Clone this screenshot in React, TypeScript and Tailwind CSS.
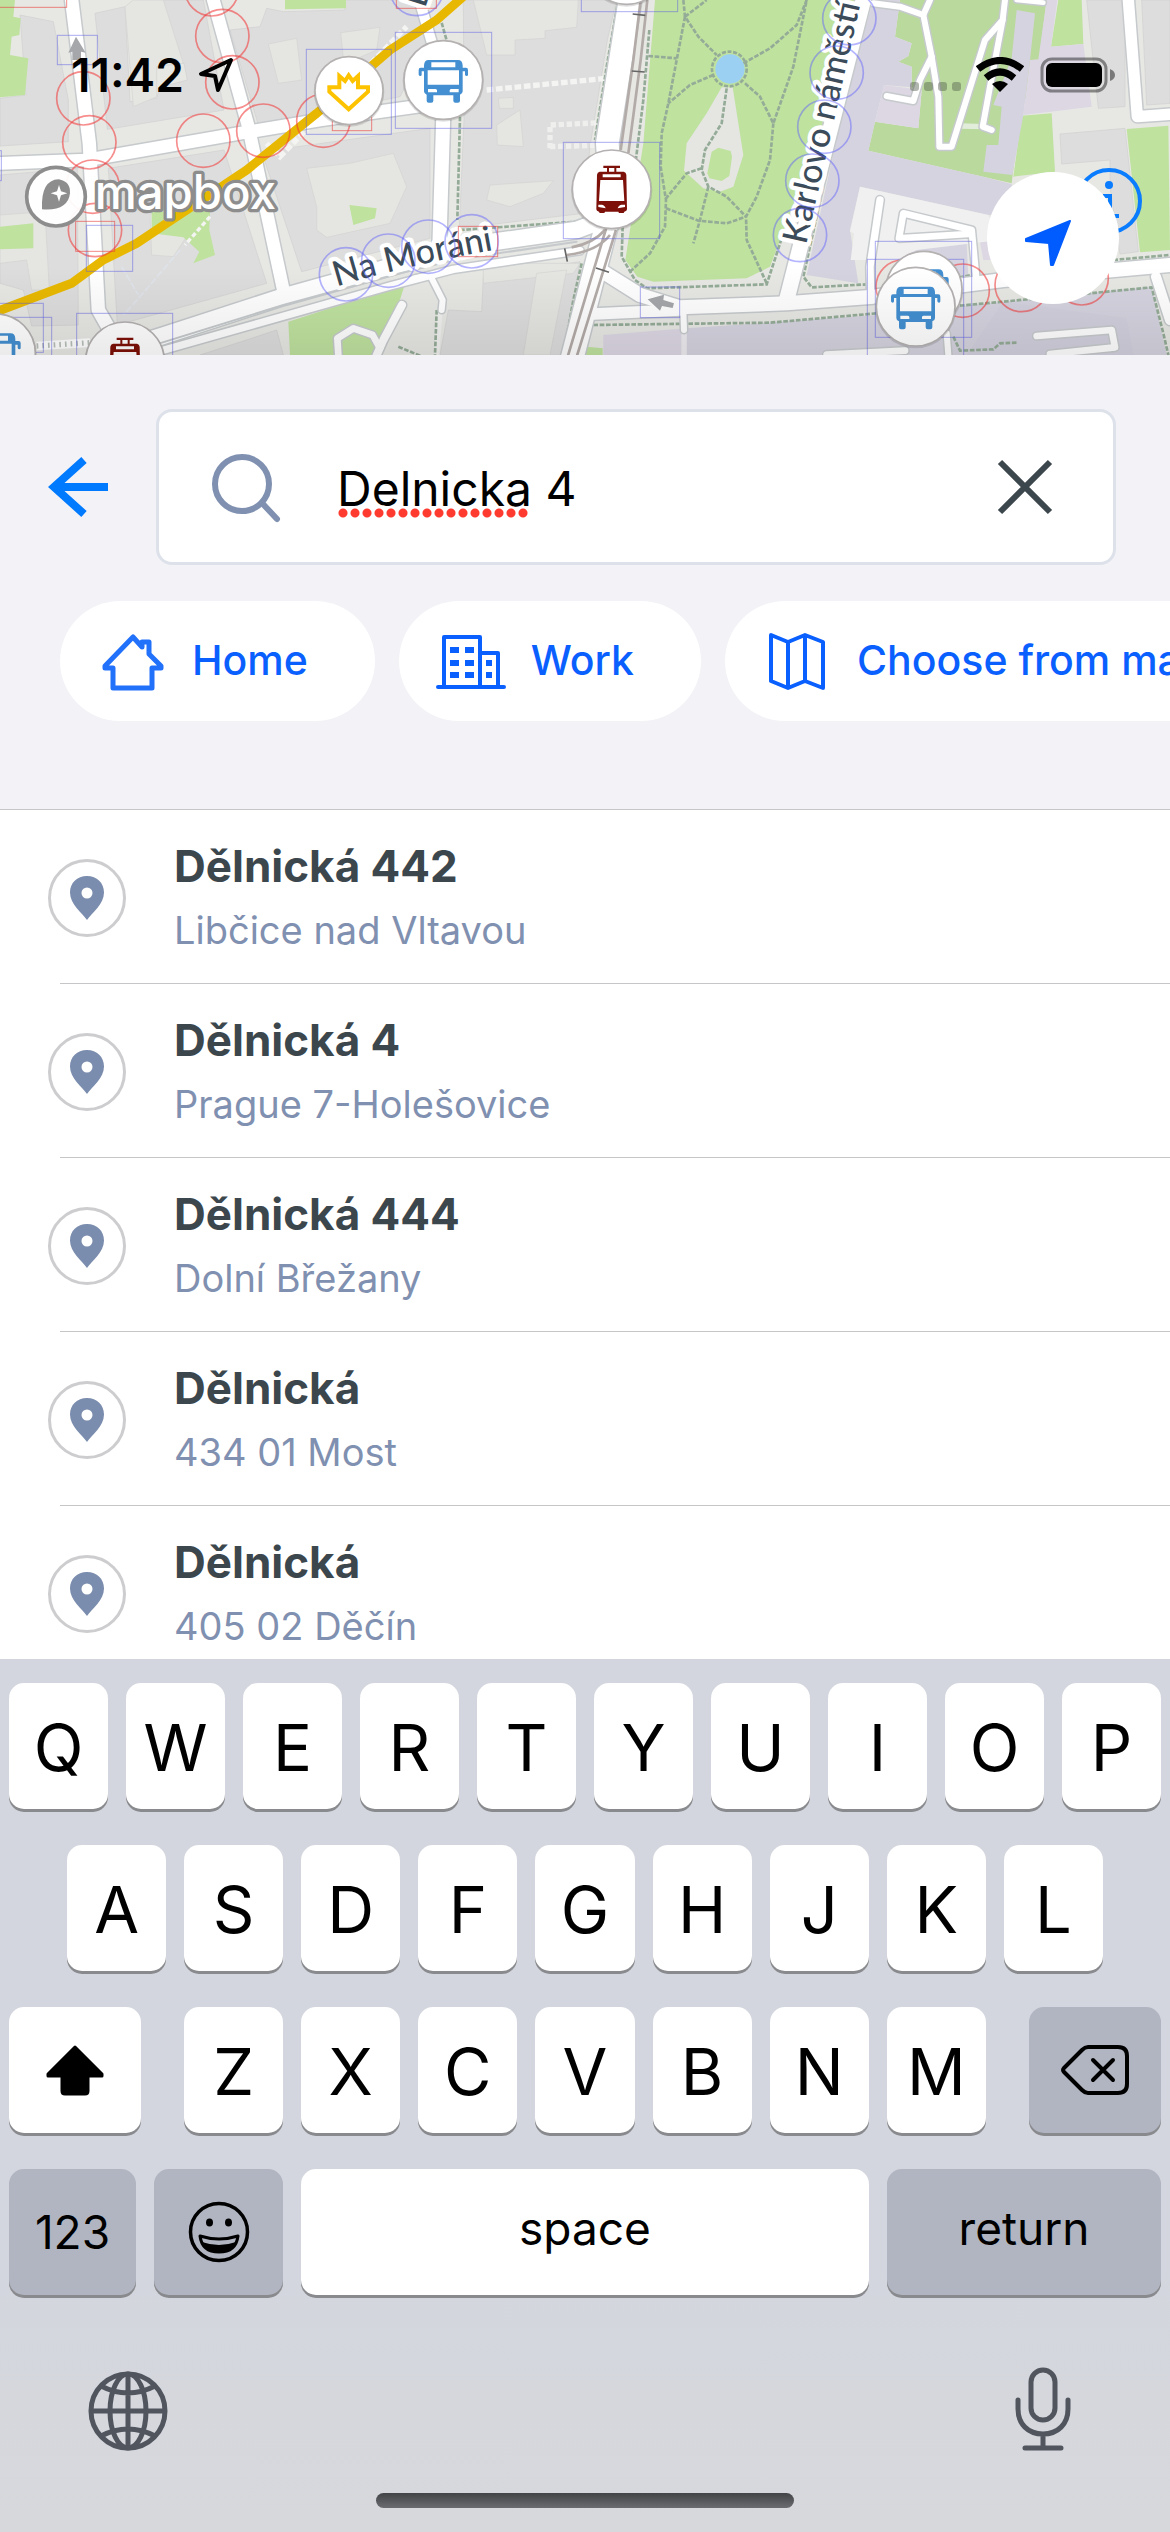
import React, { useState } from "react";

/* ---------- map drawing (units: one third of a pixel) ---------- */

const BUILDINGS = [
  "60,45 160,65 205,300 205,425 0,438 0,295 78,285",
  "285,40 375,20 390,305 470,295 480,262 562,240 552,190 520,182 488,0 610,0 672,330 322,388",
  "800,25 850,35 1035,30 1035,0 1260,0 1290,120 1200,290 775,375 690,90 780,80",
  "0,525 232,505 235,975 95,978 70,870 0,850",
  "325,505 672,450 800,850 352,975",
  "785,455 1290,385 1290,715 905,815",
  "740,1020 830,990 850,1065 600,1065",
  "1390,0 1850,0 1822,120 1770,440 1750,640 1378,685 1392,360",
  "1450,830 1740,785 1690,1065 1320,1065 1345,930 1445,935",
  "3260,0 3375,0 3375,320 3295,325",
  "3425,0 3510,0 3510,310 3440,315",
  "3180,402 3375,385 3415,755 3360,762 3330,560 3330,480 3185,492",
];

const YARDS = [
  "400,0 490,0 550,190 470,200 470,290 400,320 375,20",
  "805,132 890,115 905,240 835,250",
  "1022,98 1140,82 1130,150 1050,185 1030,175",
  "0,645 135,635 148,870 95,870 80,780 0,790",
  "450,640 540,700 560,710 520,770 455,765",
  "920,505 1050,490 1180,460 1220,560 1170,670 980,712 950,690 950,620",
  "1420,0 1735,0 1730,82 1635,92 1635,115 1545,120 1545,165 1460,165",
  "1495,295 1540,292 1540,325 1498,325",
  "1490,375 1560,330 1570,440 1492,435",
  "1470,555 1660,542 1630,580 1530,620 1460,600",
  "1450,790 1740,790 1720,820 1450,850",
  "1610,820 1700,810 1650,1065 1570,1065",
];

const GREENS = [
  "0,0 45,0 40,50 62,55 58,105 35,110 30,165 85,175 75,285 0,292",
  "855,0 1038,0 1038,25 855,28",
  "0,680 100,670 100,745 0,748",
  "455,635 630,632 628,690 645,765 580,790 598,755 550,712 455,700",
  "1048,615 1130,625 1125,655 1060,675",
  "865,965 1215,852 1190,930 1130,1065 870,1065",
  "1965,0 2610,0 2310,800 2240,835 1960,845 1912,830 1876,780 1930,430",
  "1760,1040 1808,1045 1808,1065 1750,1065",
  "3175,0 3245,0 3250,132 3153,140",
  "3065,347 3155,340 3165,515 3040,530",
  "3380,387 3505,377 3510,750 3420,757",
];

const CAMPUS = "2700,0 3140,0 3118,178 3060,345 3035,550 2605,452 2625,365 2755,385 2765,270 2735,262 2735,200 2695,185 2725,168 2735,130 2685,110";

const PURPLES = [
  "2620,0 2700,0 2685,110 2735,130 2725,168 2695,185 2735,200 2735,262 2652,255 2625,365 2605,452 2950,530 3035,552 3040,640 2965,645 2580,560 2550,690 2575,850 2420,825 2540,280",
  "3050,30 3105,40 3090,180 3070,345 3037,525 2950,515 2960,435 2995,435 3005,320 2980,315 3035,175",
  "2060,985 2630,945 3010,905 3455,860 3500,1065 2060,1065",
  "2700,740 2900,730 2905,830 2680,840",
];

const LILACS = [
  "3140,0 3172,0 3153,140 3250,132 3275,320 3070,345 3090,180 3115,178",
  "2652,255 2765,270 2755,385 2625,365",
  "1810,1005 2060,985 2060,1065 1810,1065",
  "2940,725 3000,720 3000,780 2950,780",
];

const ROADS: [string, number][] = [
  ["M215,0L268,430L295,930L335,1000", 40],
  ["M0,490L260,480L720,400L960,360L1260,318", 38],
  ["M640,0L745,380L850,870", 38],
  ["M300,1065L480,1010L850,890L1210,790L1450,730L1730,690L1810,660", 50],
  ["M450,1062L1170,858L1360,808L1740,752", 22],
  ["M1330,340L1318,740", 42],
  ["M1258,0L1302,150", 30],
  ["M1890,0L1822,430L1835,620L1808,720L1715,1080", 68],
  ["M1808,815L1920,885L2040,922L2360,910L2620,890L3010,840L3510,795", 42],
  ["M1780,942L2040,930", 34],
  ["M2590,0L2360,900", 46],
  ["M3385,0L3412,350L3520,342", 34],
  ["M2620,10L2700,20L2770,45L2795,170L2815,290L2818,440L2855,440L2955,120L3008,60L3015,0", 18],
  ["M2770,45L2790,0", 18],
  ["M2795,170L2760,240L2740,303L2660,288", 18],
  ["M3008,60L2970,260L2948,380L2975,390", 18],
  ["M3050,0L3130,8", 14],
  ["M2640,600L2610,800L2612,890", 22],
  ["M2930,850L2915,690L2710,640L2697,715L2905,702", 20],
  ["M3110,1008L3335,990L3345,1042L3150,1062", 20],
  ["M2480,1064L2715,1052", 20],
  ["M2840,1000L2845,1065", 18],
  ["M3468,830L3510,960", 30],
  ["M2050,930L2052,990", 18],
  ["M1242,835L1290,825L1328,900L1325,930", 18],
  ["M1206,915L1150,1020L1130,1065", 24],
  ["M1015,1065L1012,1015L1060,985L1118,1005L1140,1045", 20],
];

const FOOTPATHS = [
  "M2050,0L2055,50L2095,110L2150,165",
  "M2055,50L2120,0",
  "M2055,50L2030,180L2005,310L1985,400L1982,500L1998,600L1995,680L1950,760L1890,815",
  "M2140,225L2070,255L2005,310",
  "M2230,190L2310,145L2390,75L2420,0",
  "M2235,250L2280,290L2320,370L2380,200L2420,0",
  "M2320,370L2310,480L2270,590L2238,650L2240,720L2300,850",
  "M2180,265L2165,370L2115,450L2105,510L2125,560L2180,590L2238,650",
  "M2105,505L2060,520L1998,595",
  "M2125,560L2100,660L2080,730",
  "M1998,625L2095,662L2180,670L2238,650",
  "M1948,90L1930,300L1905,500",
  "M1945,168L2030,175",
  "M1868,680L1865,770L1905,840L1940,865L2300,853L2350,700",
  "M1780,975L2310,968L2630,940L3010,905L3455,862L3490,1000L3505,1065",
  "M2540,240L2410,830L2435,862L2620,852",
  "M2840,840L2930,822M3340,780L3510,765",
  "M2860,1010L2880,1052L2980,1048L3000,1030L3050,1028",
  "M1320,50L1345,140M1380,350L1372,660",
  "M1380,690L1730,665",
  "M1855,0L1820,200L1785,420",
  "M1745,790L1720,900L1690,1065M1310,930L1305,1065",
  "M1195,1040L1290,1080",
];

const RED_RINGS = [[635, -32], [667, 108], [697, 247], [790, 392], [610, 422], [970, 362], [250, 295], [268, 427], [278, 560], [285, 690], [2708, 860], [2888, 872], [3065, 855], [3245, 835]];
const BLUE_RINGS = [[1038, 823], [1165, 782], [1285, 740], [1415, 724], [1250, -33], [2548, 55], [2510, 218], [2473, 380], [2437, 542], [2400, 705]];
const BLUE_BOXES = [[172, 106, 120, 88], [259, 676, 139, 138], [919, 148, 255, 255], [230, 940, 288, 200], [16, 952, 139, 200], [-10, 910, 140, 147], [-10, 452, 14, 90], [1186, 97, 289, 288], [1690, 427, 289, 289], [1744, -40, 289, 75], [1921, 861, 118, 92], [2626, 724, 289, 288], [2602, 778, 289, 300]];
const RED_BOXES = [[-10, -10, 210, 32], [227, 664, 117, 90], [997, 290, 118, 102], [1375, 679, 118, 91], [1189, -30, 120, 55]];

function Disc({ x, y, r = 118 }: { x: number; y: number; r?: number }) {
  return (
    <>
      <circle cx={x} cy={y + 3} r={r + 4} fill="#000" opacity=".12" />
      <circle cx={x} cy={y} r={r} fill="#fff" stroke="#b5b1b1" strokeWidth="5" />
    </>
  );
}

function BusPin({ x, y, r }: { x: number; y: number; r?: number }) {
  return (
    <g>
      <Disc x={x} y={y} r={r} />
      <g transform={`translate(${x} ${y})`}>
        <path fill="#438fd1" fillRule="evenodd" d="M-44-60H44Q57-60 58-44V-37H68Q74-37 74-30V-16Q74-12 70-12T65-16V-26H58V34Q58 42 50 44V62Q50 68 44 68H36Q30 68 30 62V46H-30V62Q-30 68-36 68H-44Q-50 68-50 62V44Q-58 42-58 34V-26H-65V-16Q-65-12-69-12T-74-16V-30Q-74-37-68-37H-58V-44Q-57-60-44-60ZM-36-53V-38H36V-53ZM-47-29V14H47V-29ZM-46 27V37H-19V31Q-20 27-24 27ZM46 27V37H19V31Q20 27 24 27Z" />
      </g>
    </g>
  );
}

function TramPin({ x, y }: { x: number; y: number }) {
  return (
    <g>
      <Disc x={x} y={y} />
      <g transform={`translate(${x} ${y})`}>
        <path fill="#7d1008" fillRule="evenodd" d="M-25-71H25V-64H14V-53H36Q43-51 44-44L46 60Q46 66 38 67L36 71H22L20 67H-20L-22 71H-36L-38 67Q-46 66-46 60L-44-44Q-43-51-36-53H-14V-64H-25ZM-8-64V-53H8V-64ZM-27-45V-36H27V-45ZM-34-28L-38 35H38L34-28ZM-40 46V53L-18 57Q-22 46-30 46ZM40 46V53L18 57Q22 46 30 46Z" />
      </g>
    </g>
  );
}

function MapView() {
  return (
    <svg viewBox="0 0 3510 1065" preserveAspectRatio="xMidYMid slice" className="block h-full w-full" role="img" aria-label="Map">
      <defs>
        <linearGradient id="mapShade" x1="0" y1="0" x2="0" y2="1">
          <stop offset="0" stopColor="#000" stopOpacity="0" />
          <stop offset="1" stopColor="#000" stopOpacity=".08" />
        </linearGradient>
        <path id="naMorani" d="M1010,860Q1250,786 1640,722" />
        <path id="karlovo" d="M2418,736L2622,-170" />
      </defs>
      <rect width="3510" height="1065" fill="#e7e7e4" />
      {BUILDINGS.map((p) => <polygon key={p} points={p} fill="#dddddd" stroke="#d0d0d0" strokeWidth="2" />)}
      {YARDS.map((p) => <polygon key={p} points={p} fill="#e5e5e2" stroke="#d3d3d1" strokeWidth="2" />)}
      {GREENS.map((p) => <polygon key={p} points={p} fill="#bfe29f" />)}
      <polygon points={CAMPUS} fill="#bad99d" />
      {PURPLES.map((p) => <polygon key={p} points={p} fill="#d5d3df" />)}
      {LILACS.map((p) => <polygon key={p} points={p} fill="#dcd7e3" />)}
      <polygon points="2580,560 2965,645 3000,720 2750,750 2690,780 2552,780 2562,700 2550,695" fill="#f0f0f0" />
      <polygon points="2165,262 2198,262 2230,465 2200,560 2160,575 2110,565 2052,512 2060,430 2120,340" fill="#e5e5e2" />
      <polygon points="2155,443 2192,453 2196,470 2188,528 2165,543 2128,535 2122,520 2135,455" fill="#bfe29f" />
      <polygon points="3010,905 3380,955 3400,1065 2900,1065" fill="#d0cedb" opacity=".5" />
      <g fill="none" stroke="#f4f4f3">
        <path d="M800,430L840,470L1220,80M1460,270L1820,235" strokeWidth="16" strokeDasharray="20 8" />
        <path d="M1650,445V375L1800,368M1650,440L1790,436" strokeWidth="16" strokeDasharray="16 8" opacity=".8" />
        <path d="M630,650L555,735" strokeWidth="10" strokeDasharray="14 8" />
        <path d="M540,750L420,890L370,945M365,800L415,885" strokeWidth="5" stroke="#dfe3ea" strokeDasharray="22 6" />
        <path d="M2880,378L2950,380M1320,930L1310,1065M2052,990V1065" strokeWidth="16" opacity=".7" />
      </g>
      <g fill="none" stroke="#94ac97" strokeWidth="8" strokeDasharray="14 5">
        {FOOTPATHS.map((d) => <path key={d} d={d} />)}
      </g>
      <g fill="none" strokeLinejoin="round" strokeLinecap="round">
        {ROADS.map(([d, w]) => <path key={d} d={d} stroke="#c6cacc" strokeWidth={w + 9} />)}
        {ROADS.map(([d, w]) => <path key={d} d={d} stroke="#fff" strokeWidth={w} />)}
        <path d="M430,1045L850,915L1180,825L1360,780L1730,725" stroke="#c6cacc" strokeWidth="6" />
      </g>
      <path d="M110,1038L270,1028" stroke="#fff" strokeWidth="26" />
      <path d="M110,1038L270,1028" stroke="#b8bfb8" strokeWidth="16" strokeDasharray="5 12" />
      <circle cx="2188" cy="207" r="52" fill="none" stroke="#94ac97" strokeWidth="8" strokeDasharray="12 5" />
      <circle cx="2190" cy="207" r="44" fill="#9bd0f2" />
      <g fill="none" stroke="#b3aba8" strokeWidth="8">
        <path d="M1922,0L1900,180L1862,450M1942,0L1922,180L1885,460M1820,680L1700,1080M1848,690L1727,1080" />
        <path d="M1815,690Q1780,730 1715,742M1830,705Q1790,755 1700,765" />
        <path stroke="#666" strokeWidth="5" d="M1898,42L1936,46M1895,213L1934,216M1694,745L1702,785M1788,804L1827,817" />
      </g>
      <path fill="#a5a7aa" d="M228,110L257,158L243,155V180H217V155L205,158ZM1943,898L1992,884L1990,900L2022,910L2018,924L1986,918L1980,932Z" />
      <path d="M1395,-15L1310,60L1170,150L950,340L740,510L500,670L410,730L310,780L215,850L-10,935" fill="none" stroke="#e8b800" strokeWidth="27" />
      <g className="font-['Lato'] font-medium" fontSize="104" fill="#3b4b59" stroke="#fff" strokeWidth="26" strokeLinejoin="round" paintOrder="stroke">
        <text><textPath href="#naMorani">Na Moráni</textPath></text>
        <text><textPath href="#karlovo">Karlovo náměstí</textPath></text>
        <text transform="translate(1275 26) rotate(-72)">B</text>
      </g>
      <g fill="none" strokeWidth="5">
        {RED_RINGS.map(([x, y]) => <circle key={x} cx={x} cy={y} r="80" stroke="#f23a3a" strokeOpacity=".58" />)}
        {BLUE_RINGS.map(([x, y]) => <circle key={x} cx={x} cy={y} r="80" stroke="#5c5cff" strokeOpacity=".45" />)}
      </g>
      <g fill="none" strokeWidth="3">
        {BLUE_BOXES.map(([x, y, w, h]) => <rect key={`${x}-${y}`} x={x} y={y} width={w} height={h} stroke="#5c5ce8" strokeOpacity=".5" />)}
        {RED_BOXES.map(([x, y, w, h]) => <rect key={`${x}-${y}`} x={x} y={y} width={w} height={h} stroke="#e83a3a" strokeOpacity=".6" />)}
      </g>
      <Disc x={1880} y={-105} />
      <Disc x={1047} y={272} r={102} />
      <path d="M1018,228L1035,243L1046,226L1058,243L1074,228V262H1104V275L1046,328L988,275V262H1018Z" fill="none" stroke="#fdc300" strokeWidth="12" />
      <BusPin x={1330} y={240} />
      <TramPin x={1835} y={568} />
      <BusPin x={-12} y={1060} />
      <TramPin x={375} y={1084} />
      <BusPin x={2772} y={868} r={114} />
      <BusPin x={2747} y={920} />
      <circle cx="168" cy="590" r="88" fill="#fff" fillOpacity=".95" stroke="#8d8d8d" strokeWidth="11" />
      <path fill="#8d8d8d" fillRule="evenodd" d="M126,628Q122,540 176,538Q212,544 210,580Q204,634 126,628ZM177,555L183,574L202,580L183,586L177,605L171,586L152,580L171,574Z" />
      <text x="284" y="626" className="font-['Inter'] font-medium" fontSize="142" fill="#fff" stroke="#8d8d8d" strokeWidth="20" strokeLinejoin="round" paintOrder="stroke">mapbox</text>
      <rect width="3510" height="265" y="800" fill="url(#mapShade)" />
    </svg>
  );
}

/* ---------- status bar ---------- */

function StatusBar() {
  return (
    <div className="absolute inset-x-0 top-0 flex h-[150px] items-center pr-[54px] pl-[71px]">
      <span className="font-['Inter'] text-[46px] leading-none font-semibold text-black">11:42</span>
      <svg viewBox="0 0 36 36" className="ml-[14px] size-9" fill="none" stroke="#000" strokeWidth="4" strokeLinejoin="round" aria-label="Location in use">
        <path d="M33 3L3 17L17 19L20 33Z" />
      </svg>
      <svg viewBox="0 0 54 10" className="mt-6 ml-auto w-[54px]" fill="#55604d" opacity=".45" aria-hidden="true">
        <rect x="1" width="9" height="9" rx="3" /><rect x="15" width="9" height="9" rx="3" />
        <rect x="29" width="9" height="9" rx="3" /><rect x="43" width="9" height="9" rx="3" />
      </svg>
      <svg viewBox="0 0 48 36" className="ml-[13px] w-12" fill="none" stroke="#000" strokeWidth="7" aria-label="Wi-Fi">
        <path d="M2 12Q24-5 46 12" />
        <path d="M10 21Q24 9 38 21" />
        <path d="M16 27Q24 21 32 27L24 35Z" fill="#000" stroke="none" />
      </svg>
      <svg viewBox="0 0 76 36" className="ml-4 w-[76px]" aria-label="Battery full">
        <rect x="2" y="2" width="64" height="32" rx="10" fill="none" stroke="#000" strokeOpacity=".42" strokeWidth="3" />
        <rect x="6" y="6" width="56" height="24" rx="6" />
        <path d="M70 12Q75 14 75 18T70 24Z" fillOpacity=".45" />
      </svg>
    </div>
  );
}

/* ---------- search panel ---------- */

function HomeIcon() {
  return (
    <svg viewBox="0 0 74 60" className="w-[74px]" fill="none" stroke="#2271fb" strokeWidth="5" strokeLinejoin="round" aria-hidden="true">
      <path d="M37 6L9 35V37H17V57H56V37H65V35L53 23V11H46V16Z" />
    </svg>
  );
}

function WorkIcon() {
  return (
    <svg viewBox="0 0 74 60" className="w-[74px]" fill="none" stroke="#0a60ff" strokeWidth="4" strokeLinejoin="round" strokeLinecap="round" aria-hidden="true">
      <path d="M3 56H69M9 56V6H45V56M45 22H63V56" />
      <path strokeWidth="6" strokeLinecap="butt" strokeDasharray="9 6" d="M15 19H39M15 32H39M15 44H39" />
      <path strokeWidth="6" strokeLinecap="butt" d="M51 32H57M51 44H57" />
    </svg>
  );
}

function MapIcon() {
  return (
    <svg viewBox="0 0 74 60" className="w-[74px]" fill="none" stroke="#0a60ff" strokeWidth="4" strokeLinejoin="round" aria-hidden="true">
      <path d="M10 4L27 11L44 4L62 11V57L44 50L27 57L10 50ZM27 11V57M44 4V50" />
    </svg>
  );
}

const SHORTCUTS = [
  { label: "Home", icon: <HomeIcon /> },
  { label: "Work", icon: <WorkIcon /> },
  { label: "Choose from map", icon: <MapIcon /> },
];

function SearchPanel() {
  const [query, setQuery] = useState("Delnicka 4");
  return (
    <header className="border-b border-[#c6c6c8] bg-[#f2f2f7] pt-[54px] pb-[88px]">
      <div className="flex items-center pr-[54px]">
        <button type="button" aria-label="Back" className="flex h-[156px] w-[156px] items-center pl-12">
          <svg viewBox="0 0 62 64" className="w-[62px]" fill="none" stroke="#007aff" strokeWidth="8">
            <path d="M36 5L6 32L36 59M6 32H60" />
          </svg>
        </button>
        <div className="relative flex h-[156px] flex-1 items-center rounded-[16px] border-3 border-[#dde1e9] bg-white pr-14 pl-[52px]">
          <svg viewBox="0 0 72 72" className="size-[72px] shrink-0" fill="none" stroke="#7f90b0" strokeWidth="6" strokeLinecap="round" aria-hidden="true">
            <circle cx="31" cy="33" r="27" />
            <path d="M51 52L66 68" />
          </svg>
          <div className="relative ml-[54px] flex-1">
            <input
              type="text"
              aria-label="Search address"
              value={query}
              onChange={(e) => setQuery(e.target.value)}
              className="w-full bg-transparent pt-1 text-[48px] leading-[60px] text-black outline-none"
            />
            <span aria-hidden="true" className="absolute top-[53px] left-0 h-[10px] w-[192px] bg-[radial-gradient(circle,#ff3b30_4px,transparent_5px)] bg-size-[12px_10px]" />
          </div>
          <button type="button" aria-label="Clear search" onClick={() => setQuery("")}>
            <svg viewBox="0 0 64 64" className="size-16" stroke="#3c474d" strokeWidth="6">
              <path d="M7 7L57 57M57 7L7 57" />
            </svg>
          </button>
        </div>
      </div>
      <nav aria-label="Shortcuts" className="mt-9 flex gap-6 overflow-hidden pl-[60px]">
        {SHORTCUTS.map(({ label, icon }) => (
          <button key={label} type="button" className="flex h-[120px] shrink-0 items-center gap-[22px] rounded-full bg-white pr-[67px] pl-9 text-[41px] font-medium whitespace-nowrap text-[#0a60ff]">
            {icon}
            {label}
          </button>
        ))}
      </nav>
    </header>
  );
}

/* ---------- results ---------- */

const RESULTS = [
  ["Dělnická 442", "Libčice nad Vltavou"],
  ["Dělnická 4", "Prague 7-Holešovice"],
  ["Dělnická 444", "Dolní Břežany"],
  ["Dělnická", "434 01 Most"],
  ["Dělnická", "405 02 Děčín"],
];

function Results() {
  return (
    <ul className="min-h-0 flex-1 overflow-hidden bg-white">
      {RESULTS.map(([title, place]) => (
        <li key={title + place}>
          <button type="button" className="flex w-full items-center gap-12 pt-6 pb-[21px] pl-12 text-left">
            <span className="flex size-[78px] items-center justify-center rounded-full border-3 border-[#cdcdcf]">
              <svg viewBox="0 0 34 44" className="w-[34px]" fill="#7b8dae" fillRule="evenodd" aria-hidden="true">
                <path d="M17 0C7 0 0 7 0 16.500C0 28 12 37 17 44C22 37 34 28 34 16.500C34 7 27 0 17 0ZM17 11.500A5.500 5.500 0 1 1 17 22.500A5.500 5.500 0 1 1 17 11.500Z" />
              </svg>
            </span>
            <span className="flex flex-col">
              <span className="text-[44px] leading-[64px] font-bold text-[#3c474d]">{title}</span>
              <span className="text-[38px] leading-[64px] text-[#7f90b0]">{place}</span>
            </span>
          </button>
          <div className="ml-[60px] h-px bg-[#c6c6c8]" />
        </li>
      ))}
    </ul>
  );
}

/* ---------- keyboard ---------- */

function Key({ children, label, className = "flex-1 bg-white pt-1 text-[65px]" }: { children: React.ReactNode; label?: string; className?: string }) {
  return (
    <button type="button" aria-label={label} className={`flex h-[126px] items-center justify-center rounded-[15px] text-black shadow-[0_3px_0_#898a8d] ${className}`}>
      {children}
    </button>
  );
}

const letters = (row: string) => row.split("").map((c) => <Key key={c}>{c}</Key>);

function Keyboard() {
  return (
    <section aria-label="Keyboard" className="bg-linear-to-b from-[#d3d6de] from-70% to-[#d7d8dc] px-[9px] pt-6 pb-6">
      <div className="flex flex-col gap-9">
        <div className="flex gap-[18px]">{letters("QWERTYUIOP")}</div>
        <div className="flex gap-[18px] px-[58px]">{letters("ASDFGHJKL")}</div>
        <div className="flex gap-[18px]">
          <Key label="Shift" className="mr-[25px] w-[132px] bg-white">
            <svg viewBox="0 0 58 52" className="w-[58px]" stroke="#000" strokeWidth="3" strokeLinejoin="round">
              <path d="M29 3L56 30V32H42V47Q42 50 39 50H19Q16 50 16 47V32H2V30Z" />
            </svg>
          </Key>
          {letters("ZXCVBNM")}
          <Key label="Delete" className="ml-[25px] w-[132px] bg-[#b1b5c1]">
            <svg viewBox="0 0 70 52" className="w-[70px]" fill="none" stroke="#000" strokeWidth="4" strokeLinecap="round" strokeLinejoin="round">
              <path d="M28 3H58Q67 3 67 12V40Q67 49 58 49H28Q25 49 22 46L4 28Q2 26 4 24L22 6Q25 3 28 3ZM33 16L53 36M53 16L33 36" />
            </svg>
          </Key>
        </div>
        <div className="flex gap-[18px]">
          <Key className="w-[127px] bg-[#b1b5c1] text-[46px]">123</Key>
          <Key label="Emoji" className="w-[129px] bg-[#b1b5c1]">
            <svg viewBox="0 0 62 62" className="w-[62px]" fill="none" stroke="#000" strokeWidth="3.500">
              <circle cx="31" cy="31" r="28.500" />
              <ellipse cx="21.500" cy="21.500" rx="3.500" ry="4" fill="#000" stroke="none" />
              <ellipse cx="40.500" cy="21.500" rx="3.500" ry="4" fill="#000" stroke="none" />
              <path strokeWidth="3" strokeLinejoin="round" d="M12 35Q31 41 50 35Q48 51 31 51T12 35Z" />
              <path fill="#000" stroke="none" d="M14 41Q31 47 48 41Q43 51 31 51T14 41Z" />
            </svg>
          </Key>
          <Key className="flex-1 bg-white pb-2 text-[46px]">space</Key>
          <Key className="w-[274px] bg-[#b1b5c1] pb-2 text-[46px]">return</Key>
        </div>
      </div>
      <div className="mt-[72px] flex items-end justify-between pr-[90px] pl-[79px]">
        <button type="button" aria-label="Next keyboard">
          <svg viewBox="0 0 80 80" className="size-20" fill="none" stroke="#50555e" strokeWidth="5">
            <circle cx="40" cy="40" r="37" />
            <ellipse cx="40" cy="40" rx="18" ry="37" />
            <path d="M40 3V77M3 40H77M13 15Q40 29 67 15M13 65Q40 51 67 65" />
          </svg>
        </button>
        <button type="button" aria-label="Dictate">
          <svg viewBox="0 0 56 84" className="h-[84px]" fill="none" stroke="#50555e" strokeWidth="5" strokeLinecap="round">
            <rect x="16" y="3" width="24" height="50" rx="12" />
            <path d="M3 33V42C3 57 13 67 28 67S53 57 53 42V33M28 67V81M10 81H46" />
          </svg>
        </button>
      </div>
      <div className="mx-auto mt-[42px] h-[15px] w-[418px] rounded-full bg-linear-to-b from-[#434446] to-[#6b6c70]" />
    </section>
  );
}

export default function App() {
  return (
    <main className="flex h-screen w-full flex-col overflow-hidden bg-white font-['Inter',sans-serif]">
      <div className="relative h-[355px] shrink-0 overflow-hidden">
        <MapView />
        <StatusBar />
        <button type="button" aria-label="Map information" className="absolute top-[168px] right-[28px] size-[66px]">
          <svg viewBox="0 0 66 66" fill="none" stroke="#0a7cff" strokeWidth="4">
            <circle cx="33" cy="33" r="31" />
            <circle cx="33" cy="17" r="4" fill="#0a7cff" stroke="none" />
            <path d="M27 28H34V48M24 48H43" />
          </svg>
        </button>
        <button type="button" aria-label="Show my location" className="absolute top-[172px] right-[51px] flex size-[132px] items-center justify-center rounded-full bg-white pt-[10px] pr-[10px]">
          <svg viewBox="0 0 46 46" className="w-[46px]" fill="#005cff" stroke="#005cff" strokeWidth="2" strokeLinejoin="round">
            <path d="M45 1L1 19V21L24 23L26 45H28Z" />
          </svg>
        </button>
      </div>
      <SearchPanel />
      <Results />
      <Keyboard />
    </main>
  );
}
